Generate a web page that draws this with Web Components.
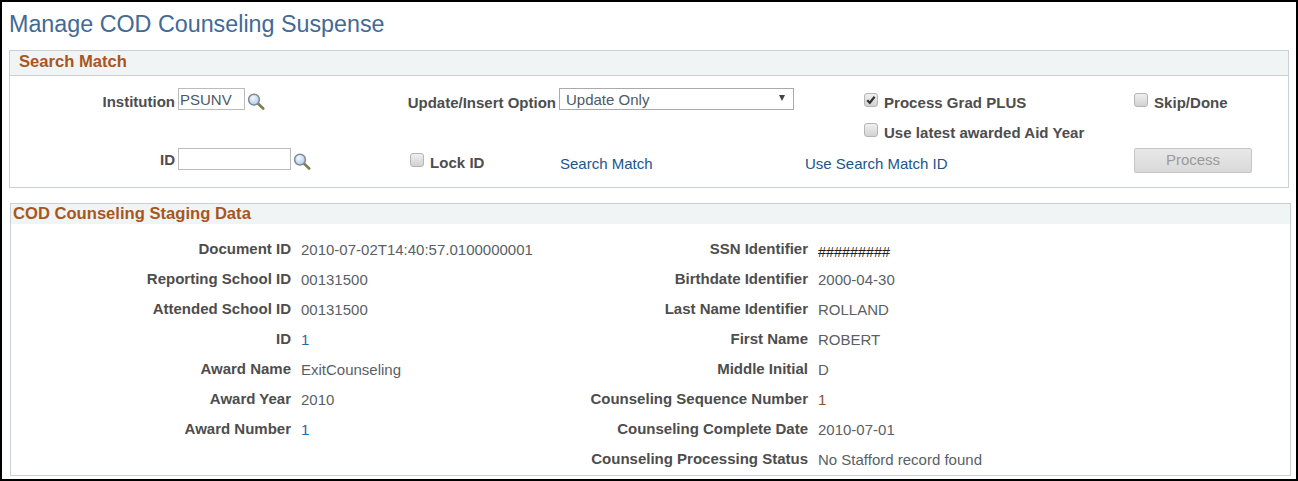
<!DOCTYPE html>
<html>
<head>
<meta charset="utf-8">
<title>Manage COD Counseling Suspense</title>
<style>
  html, body { margin: 0; padding: 0; background: #000; }
  body { font-family: 'Liberation Sans', Arial, sans-serif; }
</style>
</head>
<body>
<cod-page heading="Manage COD Counseling Suspense">
  <cod-section heading="Search Match" class="search">
    <search-form>
      <cod-label slot="inst-label">Institution</cod-label>
      <cod-lookup slot="inst" value="PSUNV" width="67"></cod-lookup>
      <cod-label slot="opt-label">Update/Insert Option</cod-label>
      <cod-select slot="opt" value="Update Only"></cod-select>
      <cod-check slot="grad" checked>Process Grad PLUS</cod-check>
      <cod-check slot="skip">Skip/Done</cod-check>
      <cod-check slot="latest">Use latest awarded Aid Year</cod-check>
      <cod-label slot="id-label">ID</cod-label>
      <cod-lookup slot="id" width="113"></cod-lookup>
      <cod-check slot="lock">Lock ID</cod-check>
      <cod-link slot="match">Search Match</cod-link>
      <cod-link slot="use">Use Search Match ID</cod-link>
      <cod-button slot="process">Process</cod-button>
    </search-form>
  </cod-section>
  <cod-section heading="COD Counseling Staging Data" class="staging">
    <staging-grid>
      <cod-field label="Document ID" value="2010-07-02T14:40:57.0100000001"></cod-field>
      <cod-field side="right" label="SSN Identifier" value="#########" tone="mask"></cod-field>
      <cod-field label="Reporting School ID" value="00131500"></cod-field>
      <cod-field side="right" label="Birthdate Identifier" value="2000-04-30"></cod-field>
      <cod-field label="Attended School ID" value="00131500"></cod-field>
      <cod-field side="right" label="Last Name Identifier" value="ROLLAND"></cod-field>
      <cod-field label="ID" value="1" tone="blue"></cod-field>
      <cod-field side="right" label="First Name" value="ROBERT"></cod-field>
      <cod-field label="Award Name" value="ExitCounseling"></cod-field>
      <cod-field side="right" label="Middle Initial" value="D"></cod-field>
      <cod-field label="Award Year" value="2010"></cod-field>
      <cod-field side="right" label="Counseling Sequence Number" value="1" tone="brown"></cod-field>
      <cod-field label="Award Number" value="1" tone="blue"></cod-field>
      <cod-field side="right" label="Counseling Complete Date" value="2010-07-01"></cod-field>
      <span></span>
      <cod-field side="right" label="Counseling Processing Status" value="No Stafford record found"></cod-field>
    </staging-grid>
  </cod-section>
</cod-page>

<script>
function shadow(el, html) {
  el.attachShadow({ mode: 'open' });
  el.shadowRoot.innerHTML = html;
}

class CodPage extends HTMLElement {
  constructor() {
    super();
    shadow(this, `
      <style>
        :host { display: block; box-sizing: border-box; width: 1298px; height: 481px; border: 2px solid #000; background: #fff; overflow: hidden; }
        h1 { margin: 0; padding: 9px 0 0 7px; height: 39px; font: normal 23.3px/26px 'Liberation Sans', Arial, sans-serif; color: #426a94; }
      </style>
      <h1></h1>
      <slot></slot>`);
    this.shadowRoot.querySelector('h1').textContent = this.getAttribute('heading');
  }
}

class CodSection extends HTMLElement {
  constructor() {
    super();
    shadow(this, `
      <style>
        :host { display: block; box-sizing: border-box; border: 1px solid #cbd0d5; background: #fff; }
        :host(.search) { width: 1280px; height: 138px; margin: 0 0 15px 7px; }
        :host(.staging) { width: 1281px; height: 273px; margin-left: 8px; }
        h2 { margin: 0; font: bold 16.6px/22px 'Liberation Sans', Arial, sans-serif; color: #a9561c; background: #f0f4f4; }
        :host(.search) h2 { padding-left: 9px; height: 24px; border-bottom: 1px solid #cbd0d5; }
        :host(.staging) h2 { padding-left: 2px; height: 20px; line-height: 20px; }
      </style>
      <h2></h2>
      <slot></slot>`);
    this.shadowRoot.querySelector('h2').textContent = this.getAttribute('heading');
  }
}

class SearchForm extends HTMLElement {
  constructor() {
    super();
    shadow(this, `
      <style>
        :host { display: grid; grid-template-columns: 165px 228px 153px 249px 59px 270px 144px; grid-template-rows: 28px 32px 24px; padding-top: 12px; color: #4d4d4d; }
        div { display: flex; align-items: center; min-width: 0; }
        .label { justify-content: flex-end; }
        .f { padding-left: 3px; }
      </style>
      <div class="label" style="grid-area:1/1"><slot name="inst-label"></slot></div>
      <div class="f" style="grid-area:1/2;padding-bottom:6px"><slot name="inst"></slot></div>
      <div class="label" style="grid-area:1/3;padding-top:2px"><slot name="opt-label"></slot></div>
      <div class="f" style="grid-area:1/4/1/6;padding-bottom:6px"><slot name="opt"></slot></div>
      <div style="grid-area:1/6;padding-top:2px"><slot name="grad"></slot></div>
      <div style="grid-area:1/7;padding-top:2px"><slot name="skip"></slot></div>
      <div style="grid-area:2/6;padding-top:2px"><slot name="latest"></slot></div>
      <div class="label" style="grid-area:3/1"><slot name="id-label"></slot></div>
      <div class="f" style="grid-area:3/2;padding-bottom:2px"><slot name="id"></slot></div>
      <div style="grid-area:3/2/3/4;padding:6px 0 0 235px"><slot name="lock"></slot></div>
      <div style="grid-area:3/4;padding:6px 0 0 4px"><slot name="match"></slot></div>
      <div style="grid-area:3/5/3/7;padding-top:6px"><slot name="use"></slot></div>
      <div style="grid-area:3/7"><slot name="process"></slot></div>`);
  }
}

class CodLabel extends HTMLElement {
  constructor() {
    super();
    shadow(this, `
      <style>:host { display: block; font: bold 15px/18px 'Liberation Sans', Arial, sans-serif; color: #4d4d4d; white-space: nowrap; }</style>
      <slot></slot>`);
  }
}

class CodLookup extends HTMLElement {
  constructor() {
    super();
    shadow(this, `
      <style>
        :host { display: flex; align-items: flex-end; gap: 2px; }
        .box { box-sizing: border-box; height: 22px; border: 1px solid #bbb; padding-left: 1px; font: 15px/21px 'Liberation Sans', Arial, sans-serif; color: #4d5a66; background: #fff; }
        svg { display: block; }
      </style>
      <div class="box"></div>
      <svg width="18" height="17" viewBox="0 0 18 17">
        <defs><radialGradient id="g" cx=".4" cy=".35" r=".7"><stop offset="0" stop-color="#f4f9fe"/><stop offset="1" stop-color="#a9c8ea"/></radialGradient></defs>
        <path d="M11 10.5l5.2 5" stroke="#7d7f4e" stroke-width="2.6" stroke-linecap="round"/>
        <circle cx="7" cy="6.6" r="5.4" fill="url(#g)" stroke="#7d8a94" stroke-width="1.5"/>
      </svg>`);
    const box = this.shadowRoot.querySelector('.box');
    box.style.width = this.getAttribute('width') + 'px';
    box.textContent = this.getAttribute('value') || '';
  }
}

class CodSelect extends HTMLElement {
  constructor() {
    super();
    shadow(this, `
      <style>
        :host { display: flex; box-sizing: border-box; width: 235px; height: 22px; border: 1px solid #aaa; padding: 0 8px 0 6px; align-items: center; justify-content: space-between; font: 15px/18px 'Liberation Sans', Arial, sans-serif; color: #4d5a66; background: #fff; }
        span { line-height: 18px; margin-top: 1px; }
        i { width: 0; height: 0; border: solid transparent; border-width: 6px 3.5px 0; border-top-color: #444; margin-top: -3px; }
      </style>
      <span></span><i></i>`);
    this.shadowRoot.querySelector('span').textContent = this.getAttribute('value');
  }
}

class CodCheck extends HTMLElement {
  constructor() {
    super();
    const on = this.hasAttribute('checked');
    shadow(this, `
      <style>
        :host { display: flex; gap: 6px; align-items: center; font: bold 15px/18px 'Liberation Sans', Arial, sans-serif; color: #4d4d4d; white-space: nowrap; letter-spacing: .04px; }
        .b { box-sizing: border-box; width: 14px; height: 14px; border: 1px solid #b5b5b5; border-radius: 3px; background: linear-gradient(#f0f0f0, #d2d2d2); margin-top: -7px; }
        svg { display: block; }
      </style>
      <div class="b">${on ? '<svg width="12" height="12" viewBox="0 0 12 12"><path d="M2.2 6.2l2.6 2.6 4.8-6" fill="none" stroke="#333" stroke-width="2.2"/></svg>' : ''}</div>
      <slot></slot>`);
  }
}

class CodLink extends HTMLElement {
  constructor() {
    super();
    shadow(this, `
      <style>:host { display: block; font: 15px/18px 'Liberation Sans', Arial, sans-serif; color: #20558a; white-space: nowrap; padding-top: 2px; }</style>
      <slot></slot>`);
  }
}

class CodButton extends HTMLElement {
  constructor() {
    super();
    shadow(this, `
      <style>
        :host { display: block; box-sizing: border-box; width: 118px; height: 25px; border: 1px solid #c6c6c6; border-radius: 2px; background: linear-gradient(#e8e8e8, #d9d9d9); font: 15px/21px 'Liberation Sans', Arial, sans-serif; color: #9a9a9a; text-align: center; }
      </style>
      <slot></slot>`);
  }
}

class StagingGrid extends HTMLElement {
  constructor() {
    super();
    shadow(this, `
      <style>:host { display: grid; grid-template-columns: 529px 1fr; grid-auto-rows: 30px; padding-top: 11px; }</style>
      <slot></slot>`);
  }
}

class CodField extends HTMLElement {
  constructor() {
    super();
    shadow(this, `
      <style>
        :host { display: grid; grid-template-columns: 280px 1fr; column-gap: 10px; align-items: center; font: 15px/18px 'Liberation Sans', Arial, sans-serif; white-space: nowrap; }
        :host([side=right]) { grid-template-columns: 268px 1fr; }
        .l { font-weight: bold; color: #4d4d4d; text-align: right; margin-top: -2px; }
        .v { color: #5a5f66; }
        :host([tone=blue]) .v { color: #1f6aa8; }
        :host([tone=brown]) .v { color: #8a4f2a; }
        :host([tone=mask]) .v { color: #222; font-size: 14.4px; margin-top: 3px; }
      </style>
      <div class="l"></div><div class="v"></div>`);
    this.shadowRoot.querySelector('.l').textContent = this.getAttribute('label');
    this.shadowRoot.querySelector('.v').textContent = this.getAttribute('value');
  }
}

customElements.define('cod-page', CodPage);
customElements.define('cod-section', CodSection);
customElements.define('search-form', SearchForm);
customElements.define('cod-label', CodLabel);
customElements.define('cod-lookup', CodLookup);
customElements.define('cod-select', CodSelect);
customElements.define('cod-check', CodCheck);
customElements.define('cod-link', CodLink);
customElements.define('cod-button', CodButton);
customElements.define('staging-grid', StagingGrid);
customElements.define('cod-field', CodField);
</script>
</body>
</html>
